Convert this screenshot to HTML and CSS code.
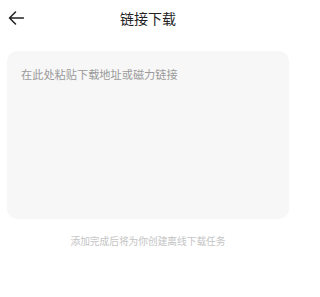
FILE: index.html
```html
<!DOCTYPE html>
<html lang="zh">
<head>
<meta charset="utf-8">
<link rel="stylesheet" href="styles.css">
</head>
<body>
<div class="page">
  <header class="bar">
    <svg class="back" width="16" height="14" viewBox="0 0 16 14"><path d="M15.5 7H1.5M7.5 1L1.5 7L7.5 13" fill="none" stroke="#222" stroke-width="1.5" stroke-linecap="round" stroke-linejoin="round"/></svg>
    <h1 class="title">链接下载</h1>
  </header>
  <div class="box">
    <div class="placeholder">在此处粘贴下载地址或磁力链接</div>
  </div>
  <p class="hint">添加完成后将为你创建离线下载任务</p>
</div>
</body>
</html>
```
FILE: styles.css
```css
html, body { margin: 0; padding: 0; background: #fff; }
body { font-family: "Noto Sans CJK SC", "Noto Sans", sans-serif; }
.page { width: 296px; }
.bar { position: relative; height: 36px; display: flex; align-items: center; justify-content: center; }
.back { position: absolute; left: 8px; top: 11px; }
.title { margin: 0; font-size: 14px; font-weight: 400; color: #222; line-height: 20px; }
.box { margin: 15px 7px 0; height: 168px; background: #f7f7f7; border-radius: 10px; padding: 15px 14px; box-sizing: border-box; }
.placeholder { font-size: 11.2px; line-height: 16px; color: #9a9a9a; }
.hint { margin: 15px 0 0; text-align: center; font-size: 9.7px; line-height: 14px; color: #c4c4c4; }
```
